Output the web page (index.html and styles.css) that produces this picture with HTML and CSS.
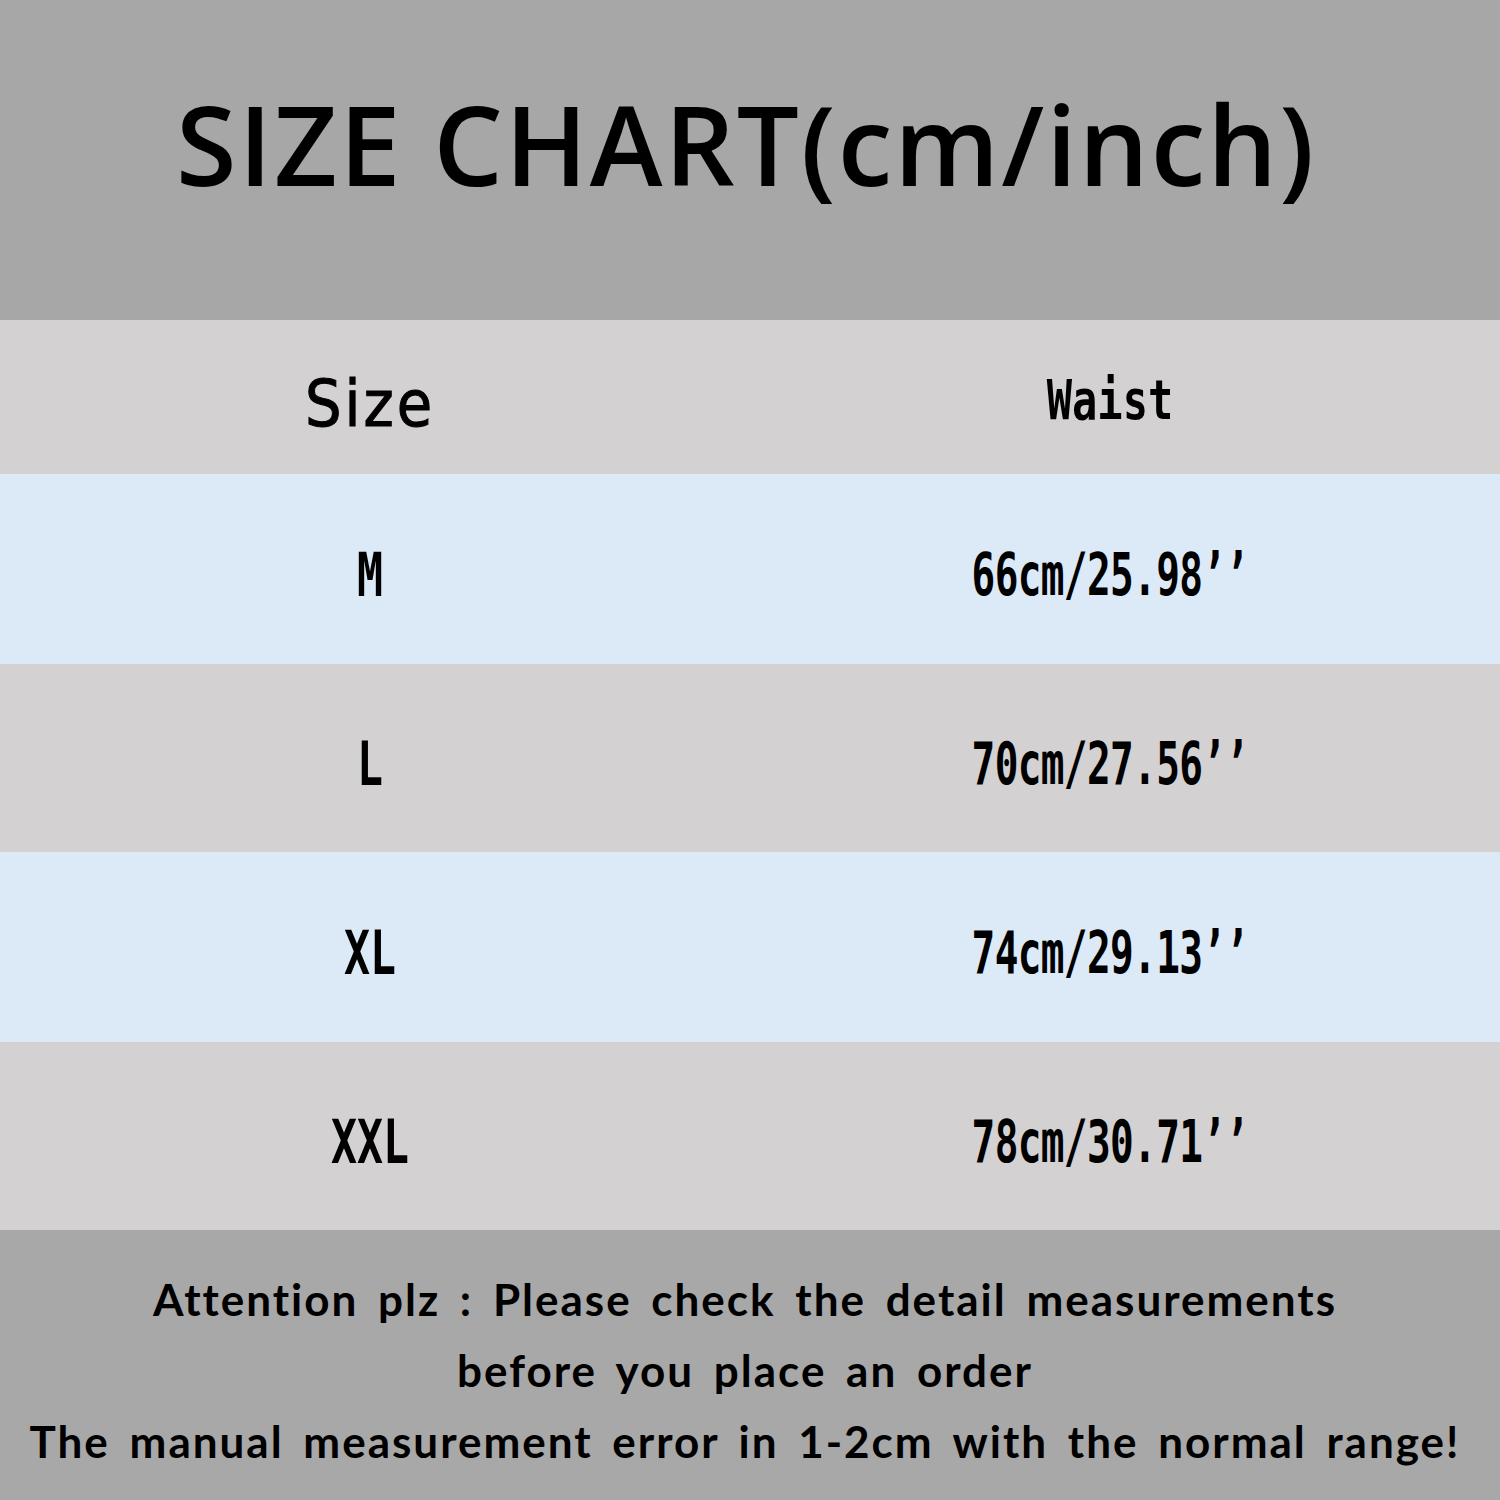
FILE: index.html
```html
<!DOCTYPE html>
<html>
<head>
<meta charset="utf-8">
<link rel="stylesheet" href="styles.css">
</head>
<body>
<div class="page">
  <header class="title-band">
    <h1 class="title">SIZE CHART(cm/inch)</h1>
  </header>
  <div class="table">
    <div class="row head">
      <div class="cell size-head">Size</div>
      <div class="cell waist-head">Waist</div>
    </div>
    <div class="row blue">
      <div class="cell size">M</div>
      <div class="cell val">66cm/25.98’’</div>
    </div>
    <div class="row gray short">
      <div class="cell size">L</div>
      <div class="cell val">70cm/27.56’’</div>
    </div>
    <div class="row blue">
      <div class="cell size">XL</div>
      <div class="cell val">74cm/29.13’’</div>
    </div>
    <div class="row gray short">
      <div class="cell size">XXL</div>
      <div class="cell val">78cm/30.71’’</div>
    </div>
  </div>
  <footer class="note">
    <p class="line">Attention plz : Please check the detail measurements</p>
    <p class="line">before you place an order</p>
    <p class="line">The manual measurement error in 1-2cm with the normal range!</p>
  </footer>
</div>
</body>
</html>
```
FILE: styles.css
```css
html, body {
  margin: 0;
  padding: 0;
}
body {
  background: #a8a8a8;
  color: #000;
}
.page {
  width: 1500px;
  height: 1500px;
  display: flex;
  flex-direction: column;
}
.title-band {
  height: 320px;
  background: #a7a7a7;
  display: flex;
  align-items: center;
  justify-content: center;
  box-sizing: border-box;
  padding-bottom: 34px;
  padding-right: 8px;
}
.title {
  margin: 0;
  font-family: "Open Sans", "DejaVu Sans", sans-serif;
  font-weight: 600;
  font-size: 110px;
  letter-spacing: 2px;
  line-height: 1;
}
.table {
  display: flex;
  flex-direction: column;
}
.row {
  display: grid;
  grid-template-columns: 740px 740px;
  height: 190px;
  box-sizing: border-box;
  padding-top: 12px;
  align-items: center;
}
.row.short {
  height: 188px;
}
.row.head {
  height: 154px;
  padding-top: 14px;
  background: #d3d1d2;
}
.row.blue {
  background: #dce9f6;
}
.row.gray {
  background: #d3d1d2;
}
.cell {
  text-align: center;
  line-height: 1;
}
.size-head {
  font-family: "DejaVu Sans Condensed", "DejaVu Sans", sans-serif;
  font-weight: 500;
  font-size: 64px;
  letter-spacing: 3px;
  -webkit-text-stroke: 1px #000;
}
.waist-head {
  font-family: "DejaVu Sans Mono", monospace;
  font-weight: 700;
  font-size: 56px;
  transform: scaleX(0.75);
  position: relative;
  top: -4px;
}
.size {
  font-family: "DejaVu Sans Mono", monospace;
  font-weight: 700;
  font-size: 60px;
  transform: scaleX(0.72);
}
.val {
  font-family: "DejaVu Sans Mono", monospace;
  font-weight: 700;
  font-size: 58px;
  transform: scaleX(0.68);
  letter-spacing: -1px;
}
.note {
  flex: 1;
  background: #a8a8a8;
  display: flex;
  flex-direction: column;
  align-items: center;
  padding-top: 34px;
  padding-right: 10px;
}
.line {
  margin: 0;
  font-family: "Lato", "Open Sans", sans-serif;
  font-weight: 700;
  font-size: 44px;
  line-height: 71px;
  letter-spacing: 2px;
  word-spacing: 7px;
  white-space: nowrap;
}
```
